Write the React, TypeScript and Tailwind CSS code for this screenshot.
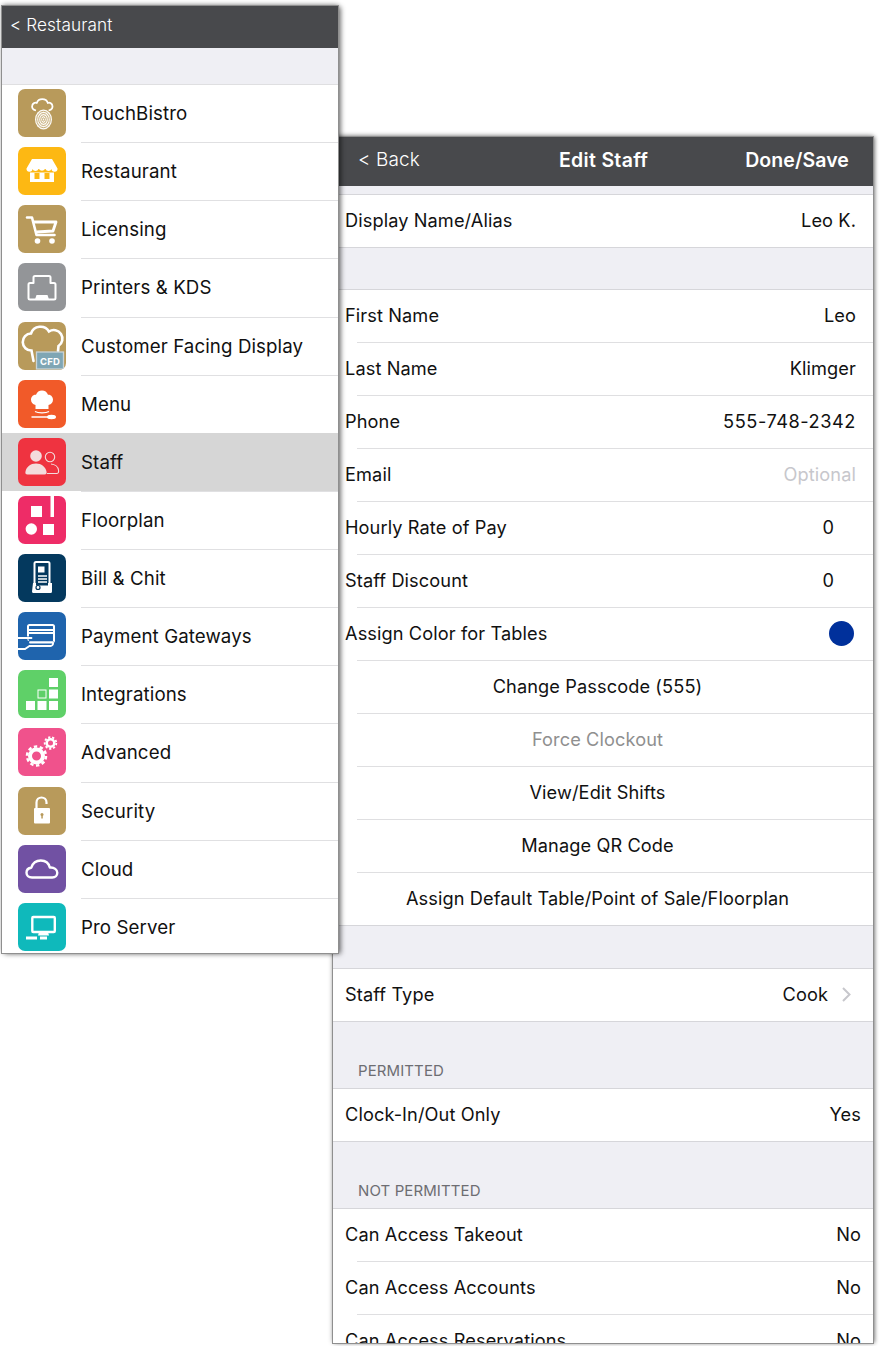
import React from "react";

const W = "#ffffff";
const Svg = ({ children }: { children: React.ReactNode }) => (
  <svg viewBox="0 0 48 48" width="48" height="48" className="block">{children}</svg>
);

const icons: Record<string, React.ReactNode> = {
  touch: (
    <Svg>
      <path d="M18 21.500c-3-.8-4.300-3-3.800-5 .5-2.300 2.800-3.300 4.600-2.500.8-2.500 3-3.800 5.500-3.800s4.700 1.300 5.500 3.800c1.800-.8 4.100.2 4.600 2.500.5 2-.8 4.200-3.800 5" fill="none" stroke={W} strokeWidth="1.800" strokeLinejoin="round" />
      <ellipse cx="25.500" cy="30.500" rx="8.500" ry="10" fill={W} opacity=".95" />
      <ellipse cx="25.500" cy="30.500" rx="6.800" ry="8.200" fill="none" stroke="#b89a5b" strokeWidth=".8" />
      <ellipse cx="25.500" cy="30.500" rx="4.800" ry="6" fill="none" stroke="#b89a5b" strokeWidth=".8" />
      <ellipse cx="25.500" cy="30.500" rx="2.800" ry="3.800" fill="none" stroke="#b89a5b" strokeWidth=".8" />
      <ellipse cx="25.500" cy="30.500" rx="1" ry="1.700" fill="none" stroke="#b89a5b" strokeWidth=".8" />
    </Svg>
  ),
  store: (
    <Svg>
      <path d="M14 12h20l5.500 9.500a3 3 0 0 1-6 .5 3.200 3.200 0 0 1-6 0h-.5a3.500 3.500 0 0 1-6 0h-.5a3.200 3.200 0 0 1-6 0 3 3 0 0 1-6-.5z" fill={W} />
      <path d="M12 25.500h24V35H12z" fill={W} />
      <path d="M16.500 26h5v6h-5zM26.500 26h5v6h-5z" fill="#fdb813" />
    </Svg>
  ),
  cart: (
    <Svg>
      <path d="M9 12.500h5l4.500 17.500h18" fill="none" stroke={W} strokeWidth="2.600" strokeLinecap="round" strokeLinejoin="round" />
      <path d="M15.500 17h22.500l-3 9-16.500 1" fill="none" stroke={W} strokeWidth="2.800" strokeLinejoin="round" />
      <circle cx="19.500" cy="36" r="2.800" fill={W} />
      <circle cx="34" cy="36" r="2.800" fill={W} />
    </Svg>
  ),
  printer: (
    <Svg>
      <path d="M15.500 20v-5.500a1.500 1.500 0 0 1 1.500-1.500h14a1.500 1.500 0 0 1 1.500 1.500V20H36a1.500 1.500 0 0 1 1.500 1.500V35a1.500 1.500 0 0 1-1.500 1.500H12a1.500 1.500 0 0 1-1.500-1.500V21.500A1.500 1.500 0 0 1 12 20z" fill="none" stroke={W} strokeWidth="2" strokeLinejoin="round" />
      <path d="M17 36.500l1.500-4.500h11l1.500 4.500z" fill={W} />
    </Svg>
  ),
  cfd: (
    <Svg>
      <path d="M15.500 39L13.500 28.500A8.500 8.500 0 0 1 13 11.500 10 10 0 0 1 31 9.500 8 8 0 0 1 40.500 24L40 29" fill="none" stroke={W} strokeWidth="2.600" strokeLinecap="round" />
      <rect x="18.500" y="30" width="27" height="17" fill="#7fa6b4" stroke="#c9d3d6" strokeWidth="1.300" />
      <text x="32" y="42.500" textAnchor="middle" fontFamily="Inter, sans-serif" fontWeight="700" fontSize="9.500" fill={W}>CFD</text>
    </Svg>
  ),
  menu: (
    <Svg>
      <path d="M17.500 25c-3-.6-4.500-2.800-4.500-5.500 0-3 2.500-5.300 5-4.800 1-2.700 3.200-4.200 6-4.200s5 1.500 6 4.200c2.500-.5 5 1.800 5 4.800 0 2.700-1.500 4.900-4.500 5.500v4h-13z" fill={W} />
      <path d="M17 31.500c3 1.800 11 1.800 14 0" fill="none" stroke={W} strokeWidth="1.200" />
      <path d="M13.500 37h17" stroke={W} strokeWidth="1.500" />
      <ellipse cx="33.500" cy="37" rx="4.500" ry="2.200" fill={W} />
    </Svg>
  ),
  staff: (
    <Svg>
      <circle cx="18" cy="18" r="5.800" fill="#f3dcdc" />
      <path d="M9.500 36.500c-1.800 0-2.500-1.200-2-3 1-4.500 5-8 10.500-8s9.500 3.500 10.500 8c.5 1.800-.2 3-2 3z" fill="#f3dcdc" />
      <circle cx="32" cy="19" r="4.700" fill="none" stroke="#f3dcdc" strokeWidth="1.100" />
      <path d="M33 26c4 .3 7 3 7.500 6 .5 2.500-.5 3.500-2 3.500H29" fill="none" stroke="#f3dcdc" strokeWidth="1.100" />
    </Svg>
  ),
  floor: (
    <Svg>
      <rect x="13" y="10" width="11" height="11" fill={W} />
      <rect x="32.500" y="0" width="3.500" height="21" fill={W} />
      <circle cx="13.300" cy="33" r="5.700" fill={W} />
      <rect x="25" y="28" width="11" height="11" fill={W} />
    </Svg>
  ),
  bill: (
    <Svg>
      <rect x="16.500" y="8" width="15" height="27" rx="1.500" fill="none" stroke={W} strokeWidth="2" />
      <rect x="20" y="12.500" width="6.500" height="6" fill={W} />
      <path d="M20 22h9M20 25h9M20 28h9" stroke={W} strokeWidth="1.500" />
      <path d="M15 29h3v2.500h12V29h4v8.500a1.500 1.500 0 0 1-1.500 1.500h-17a1.500 1.500 0 0 1-1.500-1.500z" fill={W} />
      <circle cx="20" cy="33.500" r="2" fill="none" stroke="#04395e" strokeWidth="1.200" />
    </Svg>
  ),
  pay: (
    <Svg>
      <rect x="10" y="13" width="26" height="17" rx="1.500" fill="none" stroke={W} strokeWidth="2" />
      <path d="M10 18h26M10 21h26" stroke={W} strokeWidth="1.800" />
      <path d="M0 24.500h13c3 0 3.500 2.500.5 3H8l4 2h24c.8 3-.5 5-3 5H12l-4.500 3H0z" fill="#1f64ad" />
      <path d="M0 26h13.500M12 30.500h23c.5 2-1 3.500-2.500 3.500H11.500L7 37H0" fill="none" stroke={W} strokeWidth="1.800" strokeLinecap="round" />
    </Svg>
  ),
  integ: (
    <Svg>
      <rect x="8" y="31" width="9" height="9" fill={W} />
      <rect x="19.500" y="31" width="9" height="9" fill={W} />
      <rect x="31" y="31" width="9" height="9" fill={W} />
      <rect x="31" y="19.500" width="9" height="9" fill={W} />
      <rect x="31" y="8" width="9" height="9" fill={W} />
      <rect x="20" y="20" width="8" height="8" fill="none" stroke={W} strokeWidth="1" />
    </Svg>
  ),
  adv: (
    <Svg>
      <circle cx="18.500" cy="28" r="6.500" fill="none" stroke={W} strokeWidth="4" />
      <circle cx="18.500" cy="28" r="9.500" fill="none" stroke={W} strokeWidth="2.500" strokeDasharray="3.400 2.570" />
      <circle cx="32.500" cy="15" r="3.800" fill="none" stroke={W} strokeWidth="2.600" />
      <circle cx="32.500" cy="15" r="5.800" fill="none" stroke={W} strokeWidth="1.800" strokeDasharray="2.200 1.840" />
    </Svg>
  ),
  lock: (
    <Svg>
      <path d="M18.500 21v-5.500c0-3 2.300-5 5-5 2.800 0 5 2 5 5V17" fill="none" stroke={W} strokeWidth="2.200" />
      <rect x="16" y="21" width="16" height="15.500" rx="1" fill={W} />
      <circle cx="24" cy="27.500" r="1.500" fill="#b89a5b" />
      <rect x="23.300" y="27.500" width="1.500" height="4" fill="#b89a5b" />
    </Svg>
  ),
  cloud: (
    <Svg>
      <path d="M14 32.500c-3.500 0-5.500-2.300-5.500-4.800 0-2.700 2-4.700 4.800-5 1.500-4.800 5.500-7.200 9.500-7.200 4.500 0 8 2.800 9 7 4.500-.5 7.500 2.300 7.500 5.300 0 2.700-2 4.700-5 4.700z" fill="none" stroke={W} strokeWidth="2.400" strokeLinejoin="round" />
    </Svg>
  ),
  pro: (
    <Svg>
      <rect x="14.300" y="14" width="22.500" height="15" rx="1" fill="none" stroke={W} strokeWidth="2.400" />
      <path d="M21 29h9l1 3.500H20z" fill={W} />
      <rect x="8" y="33.500" width="11" height="3" fill={W} />
      <rect x="22" y="33.500" width="7" height="3" fill={W} />
    </Svg>
  ),
};

const menu = [
  { l: "TouchBistro", i: "touch", c: "bg-[#b89a5b]" },
  { l: "Restaurant", i: "store", c: "bg-[#fdb813]" },
  { l: "Licensing", i: "cart", c: "bg-[#b89a5b]" },
  { l: "Printers & KDS", i: "printer", c: "bg-[#939598]" },
  { l: "Customer Facing Display", i: "cfd", c: "bg-[#b89a5b]" },
  { l: "Menu", i: "menu", c: "bg-[#f15a29]" },
  { l: "Staff", i: "staff", c: "bg-[#ef3340]", active: true },
  { l: "Floorplan", i: "floor", c: "bg-[#ee2c67]" },
  { l: "Bill & Chit", i: "bill", c: "bg-[#04395e]" },
  { l: "Payment Gateways", i: "pay", c: "bg-[#1f64ad]" },
  { l: "Integrations", i: "integ", c: "bg-[#5fd068]" },
  { l: "Advanced", i: "adv", c: "bg-[#f0528c]" },
  { l: "Security", i: "lock", c: "bg-[#b89a5b]" },
  { l: "Cloud", i: "cloud", c: "bg-[#7151a3]" },
  { l: "Pro Server", i: "pro", c: "bg-[#0fb9bb]" },
];

function Row({ label, value, pr = "pr-[17px]", short, sep = true, muted, children }: { label: string; value?: string; pr?: string; short?: boolean; sep?: boolean; muted?: boolean; children?: React.ReactNode }) {
  return (
    <div className={`relative shrink-0 bg-white ${short ? "h-[52px]" : "h-[53px]"}`}>
      <div className={`flex h-full items-center justify-between pl-3 ${short ? "" : "pb-0.5"} ${pr}`}>
        <span>{label}</span>
        {children ?? <span className={muted ? "text-[#c7c7cc]" : ""}>{value}</span>}
      </div>
      {sep && <div className="absolute bottom-0 left-6 right-0 h-px bg-[#dfdfe1]" />}
    </div>
  );
}

function Action({ label, muted, last }: { label: string; muted?: boolean; last?: boolean }) {
  return (
    <div className="relative h-[53px] shrink-0 bg-white">
      <div className={`flex h-full items-center justify-center pb-0.5 pr-[11px] ${muted ? "text-[#8f8f8f]" : ""}`}>{label}</div>
      <div className={last ? "absolute bottom-0 left-0 right-0 h-px bg-[#d6d6da]" : "absolute bottom-0 left-6 right-0 h-px bg-[#dfdfe1]"} />
    </div>
  );
}

const Line = () => <div className="h-px shrink-0 bg-[#d6d6da]" />;

export default function App() {
  return (
    <div className="relative h-[1346px] w-[881px] overflow-hidden bg-white font-['Inter','Liberation_Sans',sans-serif] text-[18.200px] tracking-[0.1px] text-[#111]">
      {/* Edit Staff window */}
      <div className="absolute left-[333px] top-[137px] flex h-[1206px] w-[540px] flex-col overflow-hidden bg-[#efeff4] shadow-[0_0_0_1px_#8f8f8f,0_-1px_5px_rgba(0,0,0,0.45),2px_0_4px_rgba(0,0,0,0.35)]">
        <div className="relative flex h-[49px] shrink-0 items-center bg-[#48494c] pb-0.5 pl-[25px] pr-6 text-[19.500px] text-white">
          <span className="text-[19px] font-light">&lt; Back</span>
          <span className="absolute left-[226px] font-semibold tracking-[0.3px]">Edit Staff</span>
          <span className="ml-auto font-semibold">Done/Save</span>
        </div>
        <div className="h-2 shrink-0" />
        <Line />
        <Row label="Display Name/Alias" value="Leo K." short sep={false} />
        <Line />
        <div className="h-[41px] shrink-0" />
        <Line />
        <Row label="First Name" value="Leo" />
        <Row label="Last Name" value="Klimger" />
        <Row label="Phone">
          <span className="tracking-[0.55px]">555-748-2342</span>
        </Row>
        <Row label="Email" value="Optional" muted />
        <Row label="Hourly Rate of Pay" pr="pr-[39px]" value="0" />
        <Row label="Staff Discount" pr="pr-[39px]" value="0" />
        <Row label="Assign Color for Tables" pr="pr-[19px]">
          <span className="h-[25px] w-[25px] rounded-full bg-[#00309b]" />
        </Row>
        <Action label="Change Passcode (555)" />
        <Action label="Force Clockout" muted />
        <Action label="View/Edit Shifts" />
        <Action label="Manage QR Code" />
        <Action label="Assign Default Table/Point of Sale/Floorplan" last />
        <div className="h-[42px] shrink-0" />
        <Line />
        <Row label="Staff Type" short sep={false} pr="pr-[22px]">
          <span className="flex items-center gap-[14px]">
            Cook
            <svg width="9" height="15" viewBox="0 0 9 15" fill="none" stroke="#c7c7cc" strokeWidth="2"><path d="M1 1l6.500 6.500L1 14" /></svg>
          </span>
        </Row>
        <Line />
        <div className="flex h-[66px] shrink-0 items-end pb-1.5 pl-[25px] text-[15px] text-[#6d6d72]">PERMITTED</div>
        <Line />
        <Row label="Clock-In/Out Only" value="Yes" short pr="pr-3" sep={false} />
        <Line />
        <div className="flex h-[66px] shrink-0 items-end pb-1.5 pl-[25px] text-[15px] text-[#6d6d72]">NOT PERMITTED</div>
        <Line />
        <Row label="Can Access Takeout" value="No" pr="pr-3" />
        <Row label="Can Access Accounts" value="No" pr="pr-3" />
        <Row label="Can Access Reservations" value="No" pr="pr-3" />
      </div>

      {/* Settings list window */}
      <div className="absolute left-[2px] top-1.5 flex h-[947px] w-[336px] flex-col overflow-hidden bg-white text-[18.700px] shadow-[0_0_0_1px_#8f8f8f,0_-1px_5px_rgba(0,0,0,0.4),3px_1px_5px_rgba(0,0,0,0.45)]">
        <div className="flex h-[42px] shrink-0 items-center bg-[#48494c] pb-1 pl-2 text-[17.200px] font-light text-white">&lt; Restaurant</div>
        <div className="h-9 shrink-0 bg-[#efeff4]" />
        {menu.map((m, n) => (
          <div key={m.l} className={`relative flex h-[58.140px] shrink-0 items-center pl-4 ${m.active ? "bg-[#d6d6d6]" : ""}`}>
            {n === 0 && <div className="absolute left-0 right-0 top-0 h-px bg-[#dfdfe1]" />}
            <div className={`h-12 w-12 shrink-0 overflow-hidden rounded-[7px] ${m.c}`}>{icons[m.i]}</div>
            <span className="ml-[15px] pt-0.5">{m.l}</span>
            <div className="absolute -bottom-px left-[79px] right-0 h-px bg-[#e0e0e2]" />
          </div>
        ))}
      </div>
    </div>
  );
}
